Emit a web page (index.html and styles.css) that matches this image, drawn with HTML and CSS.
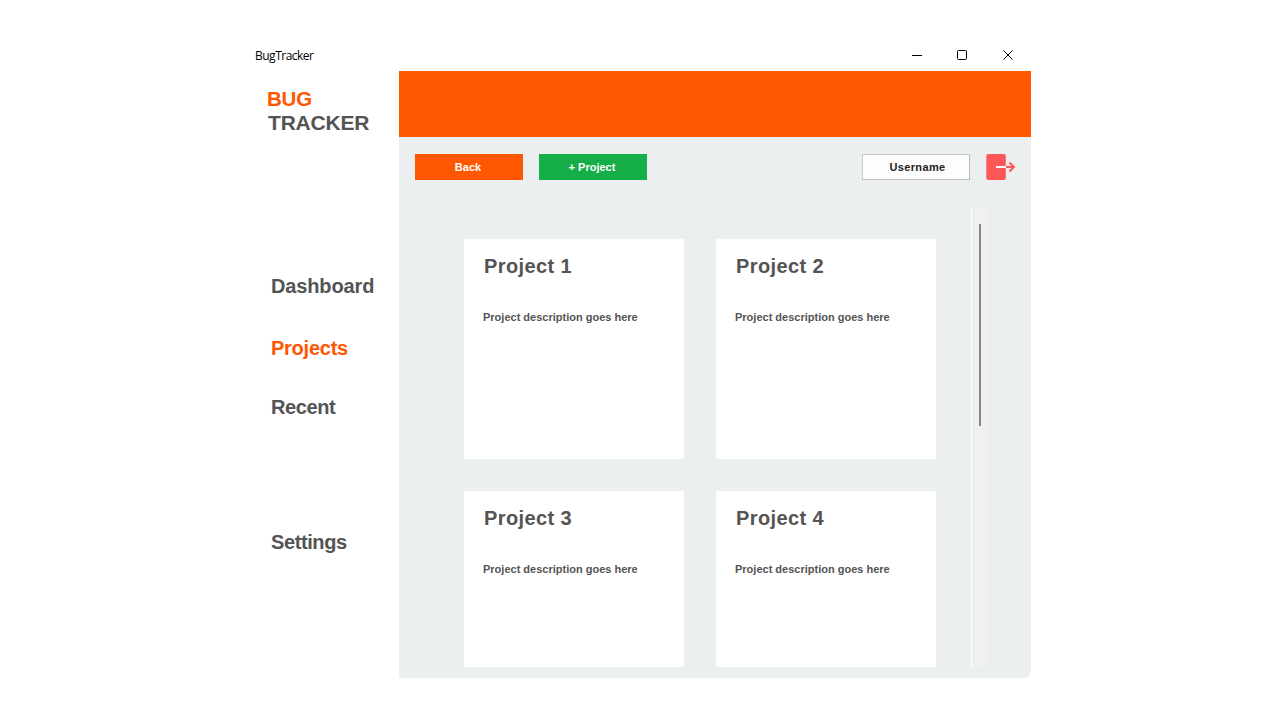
FILE: index.html
```html
<!DOCTYPE html>
<html lang="en">
<head>
<meta charset="utf-8">
<title>BugTracker</title>
<link rel="stylesheet" href="styles.css">
</head>
<body>
<div class="window">
  <header class="titlebar">
    <span class="caption">BugTracker</span>
    <svg class="controls" width="138" height="31" viewBox="0 0 138 31" fill="none" stroke="#000">
      <path d="M19 15.500h10"/>
      <rect x="64.500" y="10.500" width="9" height="9" rx="1"/>
      <path d="M110.500 10.500l9 9M119.500 10.500l-9 9"/>
    </svg>
  </header>
  <div class="body">
    <nav class="sidebar">
      <div class="logo"><span class="logo-bug">BUG</span><span class="logo-tracker">TRACKER</span></div>
      <a class="nav dashboard">Dashboard</a>
      <a class="nav projects">Projects</a>
      <a class="nav recent">Recent</a>
      <a class="nav settings">Settings</a>
    </nav>
    <main class="main">
      <div class="banner"></div>
      <div class="content">
        <div class="toolbar">
          <button class="btn back">Back</button>
          <button class="btn add">+ Project</button>
          <button class="btn user">Username</button>
          <svg class="logout" width="30" height="26" viewBox="0 0 30 26" fill="none">
            <rect x="0.300" width="19.500" height="26" rx="2" fill="#ff5757"/>
            <path d="M10 13h10" stroke="#fff" stroke-width="2"/>
            <path d="M20 13h8M23.500 8.500l4.500 4.500-4.500 4.500" stroke="#ff5757" stroke-width="2"/>
          </svg>
        </div>
        <div class="scroll">
          <div class="grid">
            <section class="card"><h2>Project 1</h2><p>Project description goes here</p></section>
            <section class="card"><h2>Project 2</h2><p>Project description goes here</p></section>
            <section class="card"><h2>Project 3</h2><p>Project description goes here</p></section>
            <section class="card"><h2>Project 4</h2><p>Project description goes here</p></section>
          </div>
          <div class="track"><div class="thumb"></div></div>
        </div>
      </div>
    </main>
  </div>
</div>
</body>
</html>
```
FILE: styles.css
```css
* { box-sizing: border-box; }
body { margin: 0; background: #fff; font-family: "Liberation Sans", Arial, sans-serif; overflow: hidden; }
.window { width: 782px; height: 638px; margin: 40px 0 0 249px; border-radius: 0 0 7px 0; overflow: hidden; }
.titlebar { height: 31px; display: flex; justify-content: space-between; padding-left: 6px; }
.caption { font: 12px/32px "Open Sans", "Noto Sans", sans-serif; letter-spacing: -0.5px; color: #000; }
.controls { display: block; }
.body { display: flex; height: 607px; }
.sidebar { width: 150px; display: flex; flex-direction: column; padding-top: 16px; }
.logo { display: flex; flex-direction: column; padding-left: 18px; font-weight: bold; font-size: 21px; line-height: 24px; color: #545454; }
.logo-bug { color: #ff5700; font-size: 20.5px; letter-spacing: -0.2px; }
.logo-tracker { padding-left: 1px; letter-spacing: -0.2px; }
.nav { padding-left: 22px; font-weight: bold; font-size: 20px; line-height: 24px; color: #545454; }
.dashboard { margin-top: 139px; letter-spacing: -0.14px; }
.projects { margin-top: 38px; color: #ff5700; letter-spacing: -0.25px; }
.recent { margin-top: 35px; letter-spacing: -0.4px; }
.settings { margin-top: 111px; letter-spacing: -0.4px; }
.main { width: 632px; display: flex; flex-direction: column; }
.banner { height: 66px; background: #ff5700; }
.content { height: 541px; background: #ebeff0; border-right: 4px solid #f0f0f0; }
.toolbar { display: flex; align-items: center; padding: 17px 11px 0 16px; }
.btn { width: 108px; height: 26px; padding: 0; border: 0; font: bold 11px/26px "Liberation Sans", Arial, sans-serif; letter-spacing: 0; color: #fff; }
.back { background: #ff5700; padding-right: 2px; }
.add { margin-left: 16px; padding-right: 2px; background: #16ae48; }
.user { margin-left: auto; background: #fdfdfd; border: 1px solid; border-color: #c8cacb #b8babb #b8babb #c8cacb; color: #222; line-height: 24px; letter-spacing: 0.35px; padding-left: 3px; }
.logout { display: block; margin-left: 16px; }
.scroll { display: flex; height: 460px; margin-top: 27px; overflow: hidden; }
.grid { display: grid; grid-template-columns: 220px 220px; grid-auto-rows: 220px; gap: 32px; padding: 32px 35px 0 65px; }
.card { background: #fff; }
.card h2 { margin: 0; padding: 15px 0 0 20px; font-size: 20px; line-height: 24px; letter-spacing: 0.4px; color: #545454; }
.card p { margin: 0; padding: 32px 0 0 19px; font-weight: bold; font-size: 11px; line-height: 14px; letter-spacing: 0; color: #545454; }
.track { width: 17px; height: 460px; background: #f0f0f0; border-left: 1px solid #fff; padding: 17px 0 0 7px; }
.thumb { width: 2px; height: 202px; background: #858585; }
```
